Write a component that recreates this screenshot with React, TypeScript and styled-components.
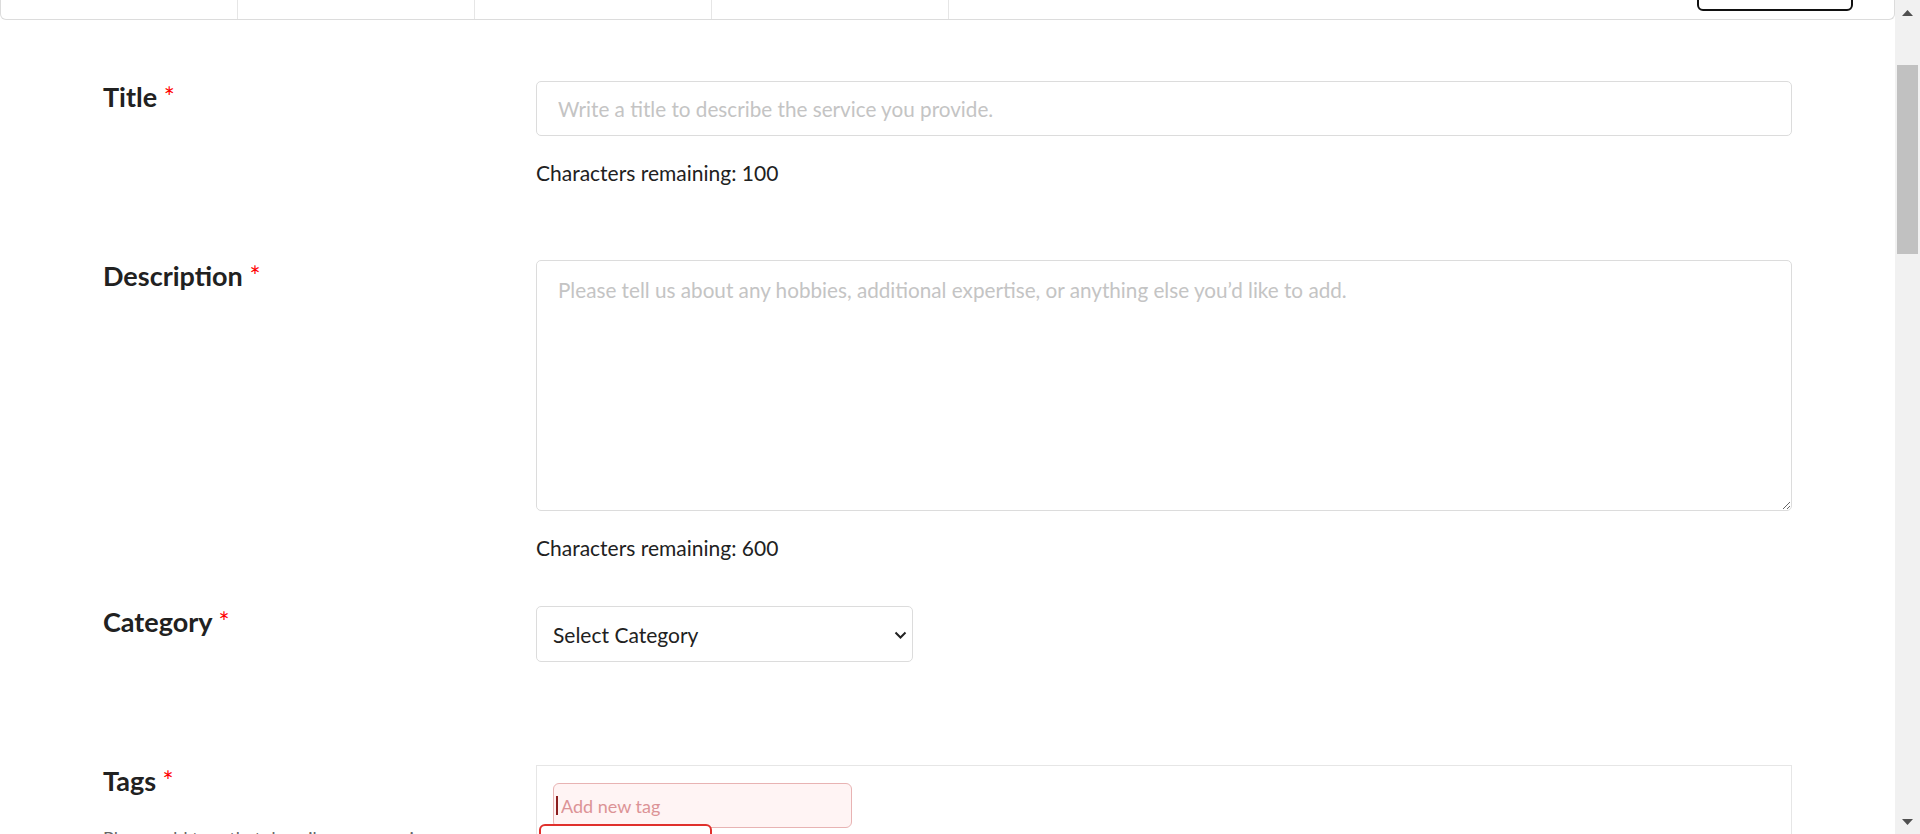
import React, { useLayoutEffect, useRef } from 'react'
import styled, { createGlobalStyle } from 'styled-components'

const GlobalStyle = createGlobalStyle`
  html, body {
    margin: 0;
    padding: 0;
    height: 100%;
    overflow: hidden;
  }
  body {
    font-family: Lato, 'Noto Sans', sans-serif;
    color: #222;
    background: #fff;
  }
  * {
    box-sizing: border-box;
  }
`

const Shell = styled.div`
  display: flex;
  width: 100%;
  height: 100vh;
`

const Viewport = styled.div`
  flex: 1;
  min-width: 0;
  overflow: hidden;
`

// fake window scrollbar
const ScrollTrack = styled.div`
  width: 25px;
  flex-shrink: 0;
  background: #f1f1f1;
  display: flex;
  flex-direction: column;
  align-items: center;
`

const ScrollArrow = styled.div`
  height: 25px;
  width: 100%;
  display: flex;
  align-items: center;
  justify-content: center;
`

const ScrollThumb = styled.div`
  margin-top: 40px;
  width: 21px;
  height: 189px;
  background: #c1c1c1;
`

const ScrollSpacer = styled.div`
  flex: 1;
`

const TopBar = styled.header`
  display: flex;
  height: 80px;
  border: 1px solid #dcdcdc;
  border-top: none;
  border-radius: 0 0 6px 6px;
`

const Tab = styled.div`
  width: 237px;
  flex-shrink: 0;
  border-right: 1px solid #e6e6e6;
`

const BarActions = styled.div`
  flex: 1;
  display: flex;
  justify-content: flex-end;
  align-items: flex-end;
  padding: 0 41px 8px 0;
`

const OutlineButton = styled.button`
  width: 156px;
  height: 44px;
  border: 2px solid #111;
  border-radius: 6px;
  background: #fff;
`

const Form = styled.form`
  max-width: 1689px;
  margin: 0 auto;
  padding-top: 61px;
`

const Row = styled.div<{ $gap: number }>`
  display: grid;
  grid-template-columns: 433px 1fr;
  margin-bottom: ${(p) => p.$gap}px;
`

const LabelCol = styled.div`
  display: flex;
  flex-direction: column;
`

const Label = styled.label`
  font-size: 27px;
  font-weight: 700;
  line-height: 1.2;
  color: #212121;
`

const Req = styled.span`
  color: #ff0000;
  font-size: 26px;
  font-weight: 400;
`

const Hint = styled.p`
  margin: 31px 0 0;
  font-size: 18px;
  line-height: 1.2;
  color: #666;
`

const Field = styled.div`
  display: flex;
  flex-direction: column;
  align-items: flex-start;
`

const TextInput = styled.input`
  width: 100%;
  height: 55px;
  padding: 0 21px;
  border: 1px solid #dcdcdc;
  border-radius: 5px;
  font-family: inherit;
  font-size: 20.7px;
  color: #222;
  outline: none;
  &::placeholder {
    color: #c4c4c4;
  }
`

const TextArea = styled.textarea`
  width: 100%;
  height: 251px;
  padding: 17px 21px;
  border: 1px solid #dcdcdc;
  border-radius: 5px;
  font-family: inherit;
  font-size: 20.7px;
  line-height: 1.2;
  color: #222;
  outline: none;
  &::placeholder {
    color: #c4c4c4;
  }
`

const Counter = styled.div`
  margin-top: 22px;
  font-size: 21px;
  line-height: 30px;
  color: #212121;
`

const SelectWrap = styled.div`
  position: relative;
  width: 377px;
  height: 56px;
`

const Select = styled.select`
  width: 100%;
  height: 100%;
  appearance: none;
  padding: 0 16px;
  border: 1px solid #dcdcdc;
  border-radius: 5px;
  background: #fff;
  font-family: inherit;
  font-size: 21px;
  color: #212121;
  outline: none;
`

const Chevron = styled.svg`
  position: absolute;
  right: 6px;
  top: 25px;
  pointer-events: none;
`

const TagsBox = styled.div`
  width: 100%;
  height: 240px;
  padding: 17px 16px;
  border: 1px solid #e6e6e6;
`

const TagInputWrap = styled.div`
  position: relative;
  width: 299px;
  height: 45px;
  &::before {
    content: '';
    position: absolute;
    left: 3px;
    top: 13px;
    width: 2px;
    height: 19px;
    background: #8b1f1f;
  }
`

const TagInput = styled.input`
  width: 100%;
  height: 100%;
  padding: 0 7px;
  border: 1px solid #e8b3b3;
  border-radius: 6px;
  background: #fff4f4;
  font-family: inherit;
  font-size: 18px;
  outline: none;
  &::placeholder {
    color: #dc9396;
  }
`

const Suggestions = styled.div`
  position: absolute;
  left: -14px;
  top: 41px;
  width: 173px;
  height: 90px;
  border: 2px solid #e0302c;
  border-radius: 6px;
  background: #fff;
`

const App: React.FC = () => {
  const viewRef = useRef<HTMLDivElement>(null)

  useLayoutEffect(() => {
    if (viewRef.current) viewRef.current.scrollTop = 60
  }, [])

  return (
    <>
      <GlobalStyle />
      <Shell>
        <Viewport ref={viewRef}>
          <TopBar>
            <Tab />
            <Tab />
            <Tab />
            <Tab />
            <BarActions>
              <OutlineButton type="button" />
            </BarActions>
          </TopBar>

          <Form>
            <Row $gap={72}>
              <Label>
                Title <Req>*</Req>
              </Label>
              <Field>
                <TextInput placeholder="Write a title to describe the service you provide." />
                <Counter>Characters remaining: 100</Counter>
              </Field>
            </Row>

            <Row $gap={43}>
              <Label>
                Description <Req>*</Req>
              </Label>
              <Field>
                <TextArea placeholder="Please tell us about any hobbies, additional expertise, or anything else you’d like to add." />
                <Counter>Characters remaining: 600</Counter>
              </Field>
            </Row>

            <Row $gap={103}>
              <Label>
                Category <Req>*</Req>
              </Label>
              <Field>
                <SelectWrap>
                  <Select defaultValue="">
                    <option value="">Select Category</option>
                  </Select>
                  <Chevron width="13" height="8" viewBox="0 0 13 8">
                    <polyline points="1.5,1.5 6.5,6.5 11.5,1.5" fill="none" stroke="#222" strokeWidth="2" />
                  </Chevron>
                </SelectWrap>
              </Field>
            </Row>

            <Row $gap={0}>
              <LabelCol>
                <Label>
                  Tags <Req>*</Req>
                </Label>
                <Hint>Please add tags that describe your service</Hint>
              </LabelCol>
              <Field>
                <TagsBox>
                  <TagInputWrap>
                    <TagInput placeholder="Add new tag" />
                    <Suggestions />
                  </TagInputWrap>
                </TagsBox>
              </Field>
            </Row>
          </Form>
        </Viewport>

        <ScrollTrack>
          <ScrollArrow>
            <svg width="11" height="6" viewBox="0 0 11 6">
              <polygon points="0,6 5.5,0 11,6" fill="#505050" />
            </svg>
          </ScrollArrow>
          <ScrollThumb />
          <ScrollSpacer />
          <ScrollArrow>
            <svg width="11" height="6" viewBox="0 0 11 6">
              <polygon points="0,0 5.5,6 11,0" fill="#505050" />
            </svg>
          </ScrollArrow>
        </ScrollTrack>
      </Shell>
    </>
  )
}

export default App
